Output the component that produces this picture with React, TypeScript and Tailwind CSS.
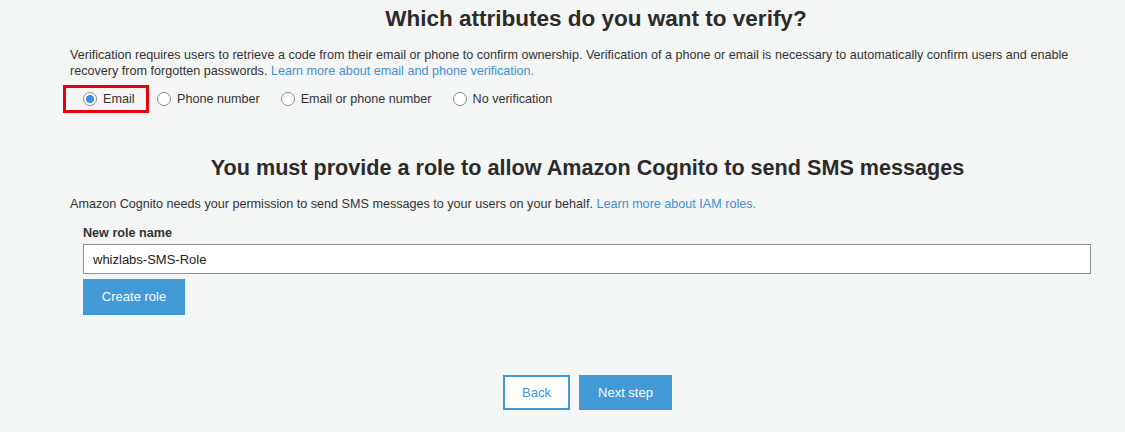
import React from "react";

type RadioProps = { label: string; checked?: boolean };

function Radio({ label, checked }: RadioProps) {
  return (
    <label className="flex items-center gap-[6px] cursor-pointer">
      <span className="w-[14px] h-[14px] rounded-full border border-[#8a8a8a] bg-white flex items-center justify-center">
        {checked && <span className="w-[8px] h-[8px] rounded-full bg-[#3b8fd6]" />}
      </span>
      <span className="text-[12.6px] text-[#333]">{label}</span>
    </label>
  );
}

export default function App() {
  return (
    <div
      className="w-[1125px] h-[432px] bg-[#f4f5f5] overflow-hidden text-[#333]"
      style={{ fontFamily: '"Liberation Sans", Arial, sans-serif' }}
    >
      <div className="ml-[70px] w-[1052px] flex flex-col">
        <h1 className="pt-[5px] text-[22.5px] leading-[28px] font-bold text-center text-[#2b2b2b]">
          Which attributes do you want to verify?
        </h1>
        <p className="mt-[14px] pr-[10px] text-[12.6px] leading-[16px]">
          Verification requires users to retrieve a code from their email or phone to confirm ownership. Verification of a
          phone or email is necessary to automatically confirm users and enable recovery from forgotten passwords.{" "}
          <a className="text-[#3f91d6]">Learn more about email and phone verification.</a>
        </p>
        <div className="mt-[6px] -ml-[7px] flex items-center">
          <div className="w-[86px] h-[28px] border-[3px] border-[#e8000b] flex items-center pl-[17px] pt-[1px]">
            <Radio label="Email" checked />
          </div>
          <div className="ml-[8px] pt-[1px] flex items-center gap-[21px]">
            <Radio label="Phone number" />
            <Radio label="Email or phone number" />
            <Radio label="No verification" />
          </div>
        </div>

        <h2 className="mt-[41px] pr-[17px] text-[21.6px] leading-[28px] font-bold text-center text-[#2b2b2b]">
          You must provide a role to allow Amazon Cognito to send SMS messages
        </h2>
        <p className="mt-[14px] text-[12.6px] leading-[16px]">
          Amazon Cognito needs your permission to send SMS messages to your users on your behalf.{" "}
          <a className="text-[#3f91d6]">Learn more about IAM roles.</a>
        </p>
        <div className="pl-[13px] pr-[31px] flex flex-col">
          <label className="mt-[13px] text-[12.6px] leading-[16px] font-bold">New role name</label>
          <input
            readOnly
            value="whizlabs-SMS-Role"
            className="mt-[3px] h-[30px] w-full border border-[#8c918f] bg-white px-[9px] text-[13px] text-[#222] outline-none"
            style={{ fontFamily: '"Liberation Sans", Arial, sans-serif' }}
          />
          <button className="mt-[5px] w-[102px] h-[36px] bg-[#4299d6] text-white text-[13px]">Create role</button>
        </div>

        <div className="mt-[60px] pr-[17px] flex justify-center gap-[9px]">
          <button className="w-[67px] h-[35px] border-2 border-[#4299d6] bg-white text-[#4299d6] text-[13px]">Back</button>
          <button className="w-[93px] h-[35px] bg-[#4299d6] text-white text-[13px]">Next step</button>
        </div>
      </div>
    </div>
  );
}
